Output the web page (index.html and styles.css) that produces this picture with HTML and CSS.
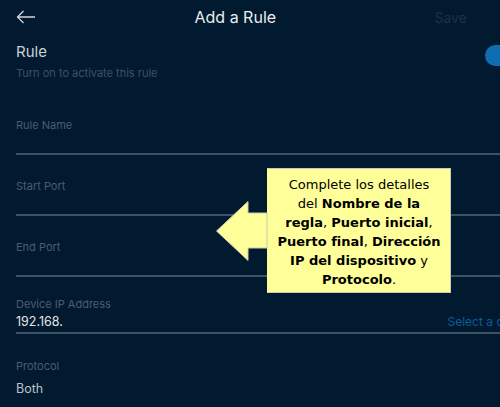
FILE: index.html
```html
<!DOCTYPE html>
<html lang="es">
<head>
<meta charset="utf-8">
<title>Add a Rule</title>
<link rel="stylesheet" href="styles.css">
</head>
<body>
<div class="screen">
  <header class="topbar">
    <span class="back">
      <svg width="20" height="14" viewBox="0 0 20 14"><path d="M19 7H1.5M7.5 1L1.5 7l6 6" fill="none" stroke="#cfd6dc" stroke-width="1.3"/></svg>
    </span>
    <h1 class="title">Add a Rule</h1>
    <span class="save">Save</span>
  </header>

  <div class="form">
    <div class="rule-row">
      <div>
        <div class="rule-title">Rule</div>
        <div class="rule-sub">Turn on to activate this rule</div>
      </div>
      <span class="toggle"><span class="knob"></span></span>
    </div>

    <div class="field first">
      <div class="label">Rule Name</div>
      <div class="value"></div>
    </div>
    <div class="field">
      <div class="label">Start Port</div>
      <div class="value"></div>
    </div>
    <div class="field">
      <div class="label">End Port</div>
      <div class="value"></div>
    </div>
    <div class="field ip">
      <div class="label">Device IP Address</div>
      <div class="value"><span class="ipval">192.168.</span><span class="select">Select a device</span></div>
    </div>
    <div class="plain">
      <div class="label">Protocol</div>
      <div class="both">Both</div>
    </div>
  </div>

  <div class="callout">
    <svg class="arrow" width="52" height="62" viewBox="0 0 52 62"><polygon points="0.5,31 32,1.5 32,13 51,13 51,48 32,48 32,60.5" fill="#ffff99" stroke="#c9c9b8" stroke-width="1"/></svg>
    <div class="bubble">Complete los detalles<br>del <b>Nombre de la</b><br><b>regla</b>, <b>Puerto inicial</b>,<br><b>Puerto final</b>, <b>Dirección</b><br><b>IP del dispositivo</b> y<br><b>Protocolo</b>.</div>
  </div>
</div>
</body>
</html>
```

FILE: styles.css
```css
* { box-sizing: border-box; }
html, body {
  margin: 0;
  padding: 0;
  background: #021a2f;
}
body {
  width: 500px;
  height: 407px;
  overflow: hidden;
  font-family: Inter, "Noto Sans", sans-serif;
}
.screen {
  position: relative;
  width: 500px;
  height: 407px;
}
.topbar {
  display: flex;
  align-items: center;
  height: 34px;
  padding: 0 33px 0 16px;
}
.back {
  width: 20px;
  height: 14px;
  display: flex;
}
.title {
  flex: 1;
  margin: 0;
  text-align: center;
  font-size: 16px;
  font-weight: 400;
  color: #e9edf0;
}
.save {
  font-size: 14px;
  color: #1b3147;
}
.form {
  width: 550px;
  padding: 0 16px;
}
.rule-row {
  display: flex;
  justify-content: space-between;
  align-items: flex-start;
  margin-top: 9px;
}
.rule-title {
  font-size: 15px;
  line-height: 18px;
  color: #c9d1d8;
}
.rule-sub {
  margin-top: 5px;
  font-size: 11px;
  line-height: 14px;
  color: #3b5166;
}
.toggle {
  width: 49px;
  height: 21px;
  margin-top: 2px;
  border-radius: 11px;
  background: #0f6eb0;
  display: flex;
  justify-content: flex-end;
  padding: 2px;
}
.knob {
  width: 17px;
  height: 17px;
  border-radius: 50%;
  background: #fff;
}
.field {
  margin-top: 24px;
  border-bottom: 2px solid #3e5165;
}
.field.first { margin-top: 38px; }
.field.ip { margin-top: 20px; }
.label {
  font-size: 11px;
  line-height: 14px;
  color: #4a5d70;
}
.value {
  height: 21px;
  display: flex;
  align-items: center;
  justify-content: space-between;
}
.ipval {
  font-size: 12.5px;
  color: #e2e6ea;
}
.select {
  font-size: 12px;
  color: #0c5a99;
}
.plain { margin-top: 25px; }
.both {
  margin-top: 7px;
  font-size: 12.5px;
  line-height: 18px;
  color: #b9c2ca;
}
.callout {
  position: absolute;
  left: 216px;
  top: 168px;
  display: flex;
  align-items: flex-start;
}
.arrow {
  margin-top: 32px;
  margin-right: -1px;
  position: relative;
  z-index: 1;
}
.bubble {
  width: 184px;
  height: 125px;
  padding: 6px 0 0;
  background: #ffff99;
  border: 1px solid #c9c9b8;
  border-left-color: #ffff99;
  font-family: "DejaVu Sans", Verdana, sans-serif;
  font-size: 13px;
  line-height: 19px;
  color: #000;
  text-align: center;
  white-space: nowrap;
}
.bubble b { font-weight: 700; }
```
